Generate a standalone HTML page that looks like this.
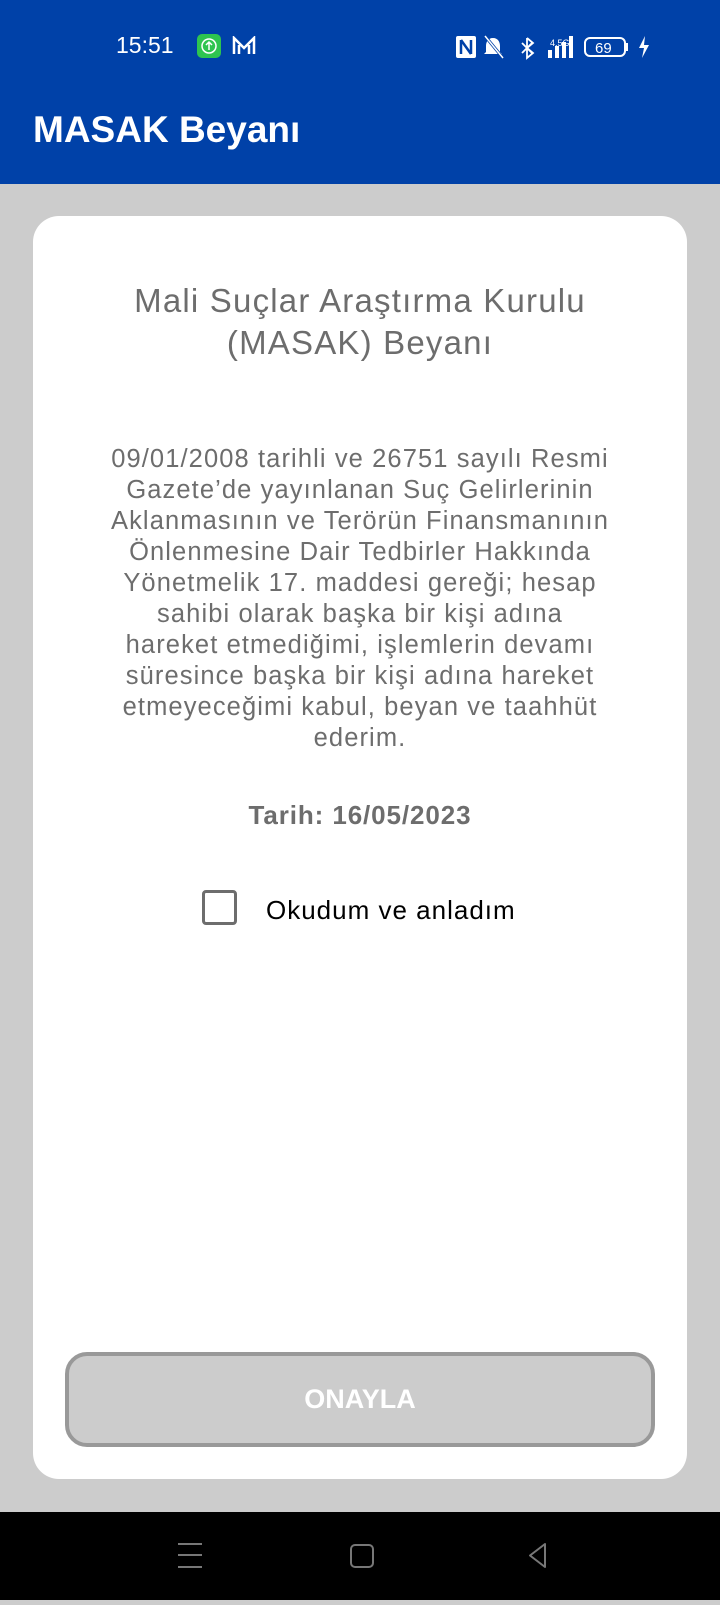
<!DOCTYPE html>
<html><head><meta charset="utf-8"><style>
*{margin:0;padding:0;box-sizing:border-box}
body{width:720px;height:1600px;background:#cccccc;font-family:"Liberation Sans","DejaVu Sans",sans-serif;position:relative;overflow:hidden}
.top{position:absolute;left:0;top:0;width:720px;height:184px;background:#0041a8;color:#fff}
.time{position:absolute;left:116px;top:32px;font-size:23px}
.app{position:absolute;left:33px;top:109px;font-size:37px;font-weight:bold}
.card{position:absolute;left:33px;top:216px;width:654px;height:1263px;background:#fff;border-radius:26px}
.t{position:absolute;left:0;width:100%;text-align:center;color:#6d6d6d;white-space:nowrap}
.title{top:280px;font-size:33px;line-height:42px;letter-spacing:1.2px}
.para{top:444px;font-size:25.5px;line-height:31px;letter-spacing:1.1px}
.date{top:800px;font-size:26px;font-weight:bold;letter-spacing:0.9px}
.cb{position:absolute;left:202px;top:890px;width:35px;height:35px;border:3px solid #6d6d6d;border-radius:4px}
.lbl{position:absolute;left:266px;top:895px;font-size:26px;color:#000;letter-spacing:1px}
.btn{position:absolute;left:65px;top:1352px;width:590px;height:95px;background:#cccccc;border:4px solid #999;border-radius:22px;color:#fff;font-weight:bold;font-size:27px;text-align:center;line-height:87px}
.nav{position:absolute;left:0;top:1512px;width:720px;height:88px;background:#000}
</style></head><body>
<div class="top">
<div class="time">15:51</div>
<div style="position:absolute;left:197px;top:34px;width:24px;height:24px;background:#2ec44f;border-radius:5px"><svg width="24" height="24"><circle cx="12" cy="12" r="7" fill="none" stroke="#fff" stroke-width="1.5"/><path d="M12 16V8M9 11l3-3 3 3" fill="none" stroke="#fff" stroke-width="1.5"/></svg></div>
<svg style="position:absolute;left:232px;top:36px" width="24" height="20"><path d="M2 18V2l10 10L22 2v16M7 18V9M17 18V9" fill="none" stroke="#fff" stroke-width="2.5"/></svg>
<svg style="position:absolute;left:455px;top:34px" width="210" height="26" fill="#fff">
<rect x="1" y="2" width="20" height="22" rx="2"/><path d="M6 6v14M6 6l10 14M16 6v14" stroke="#0041a8" stroke-width="2.5"/>
<path d="M38 4c-5 0-7 4-7 8v6l-2 2h18l-2-2v-6c0-4-2-8-7-8z"/><path d="M30 2l18 22" stroke="#0041a8" stroke-width="3"/><path d="M30 2l18 22" stroke="#fff" stroke-width="1.5"/>
<path d="M72 4l6 5-6 5 6 5-6 5V4M67 9l10 10M67 19l10-10" fill="none" stroke="#fff" stroke-width="1.8"/>
<text x="95" y="12" font-size="9" font-family="Liberation Sans">4.5G</text>
<rect x="93" y="16" width="4" height="8"/><rect x="100" y="12" width="4" height="12"/><rect x="107" y="8" width="4" height="16"/><rect x="114" y="2" width="4" height="22"/>
<rect x="130" y="4" width="40" height="18" rx="5" fill="none" stroke="#fff" stroke-width="2"/><rect x="171" y="9" width="2" height="8"/>
<text x="140" y="19" font-size="15" font-family="Liberation Sans">69</text>
<path d="M190 2l-6 12h5l-2 10 7-13h-5z"/>
</svg>
<div class="app">MASAK Beyanı</div>
</div>
<div class="card"></div>
<div class="t title">Mali Suçlar Araştırma Kurulu<br>(MASAK) Beyanı</div>
<div class="t para">09/01/2008 tarihli ve 26751 sayılı Resmi<br>Gazete’de yayınlanan Suç Gelirlerinin<br>Aklanmasının ve Terörün Finansmanının<br>Önlenmesine Dair Tedbirler Hakkında<br>Yönetmelik 17. maddesi gereği; hesap<br>sahibi olarak başka bir kişi adına<br>hareket etmediğimi, işlemlerin devamı<br>süresince başka bir kişi adına hareket<br>etmeyeceğimi kabul, beyan ve taahhüt<br>ederim.</div>
<div class="t date">Tarih: 16/05/2023</div>
<div class="cb"></div>
<div class="lbl">Okudum ve anladım</div>
<div class="btn">ONAYLA</div>
<div class="nav">
<svg width="720" height="88" fill="none" stroke="#777" stroke-width="2">
<path d="M178 32h24M178 43h24M178 55h24"/>
<rect x="351" y="33" width="22" height="22" rx="4"/>
<path d="M545 32v23l-15-11.5z" stroke-linejoin="round"/>
</svg>
</div>
</body></html>
